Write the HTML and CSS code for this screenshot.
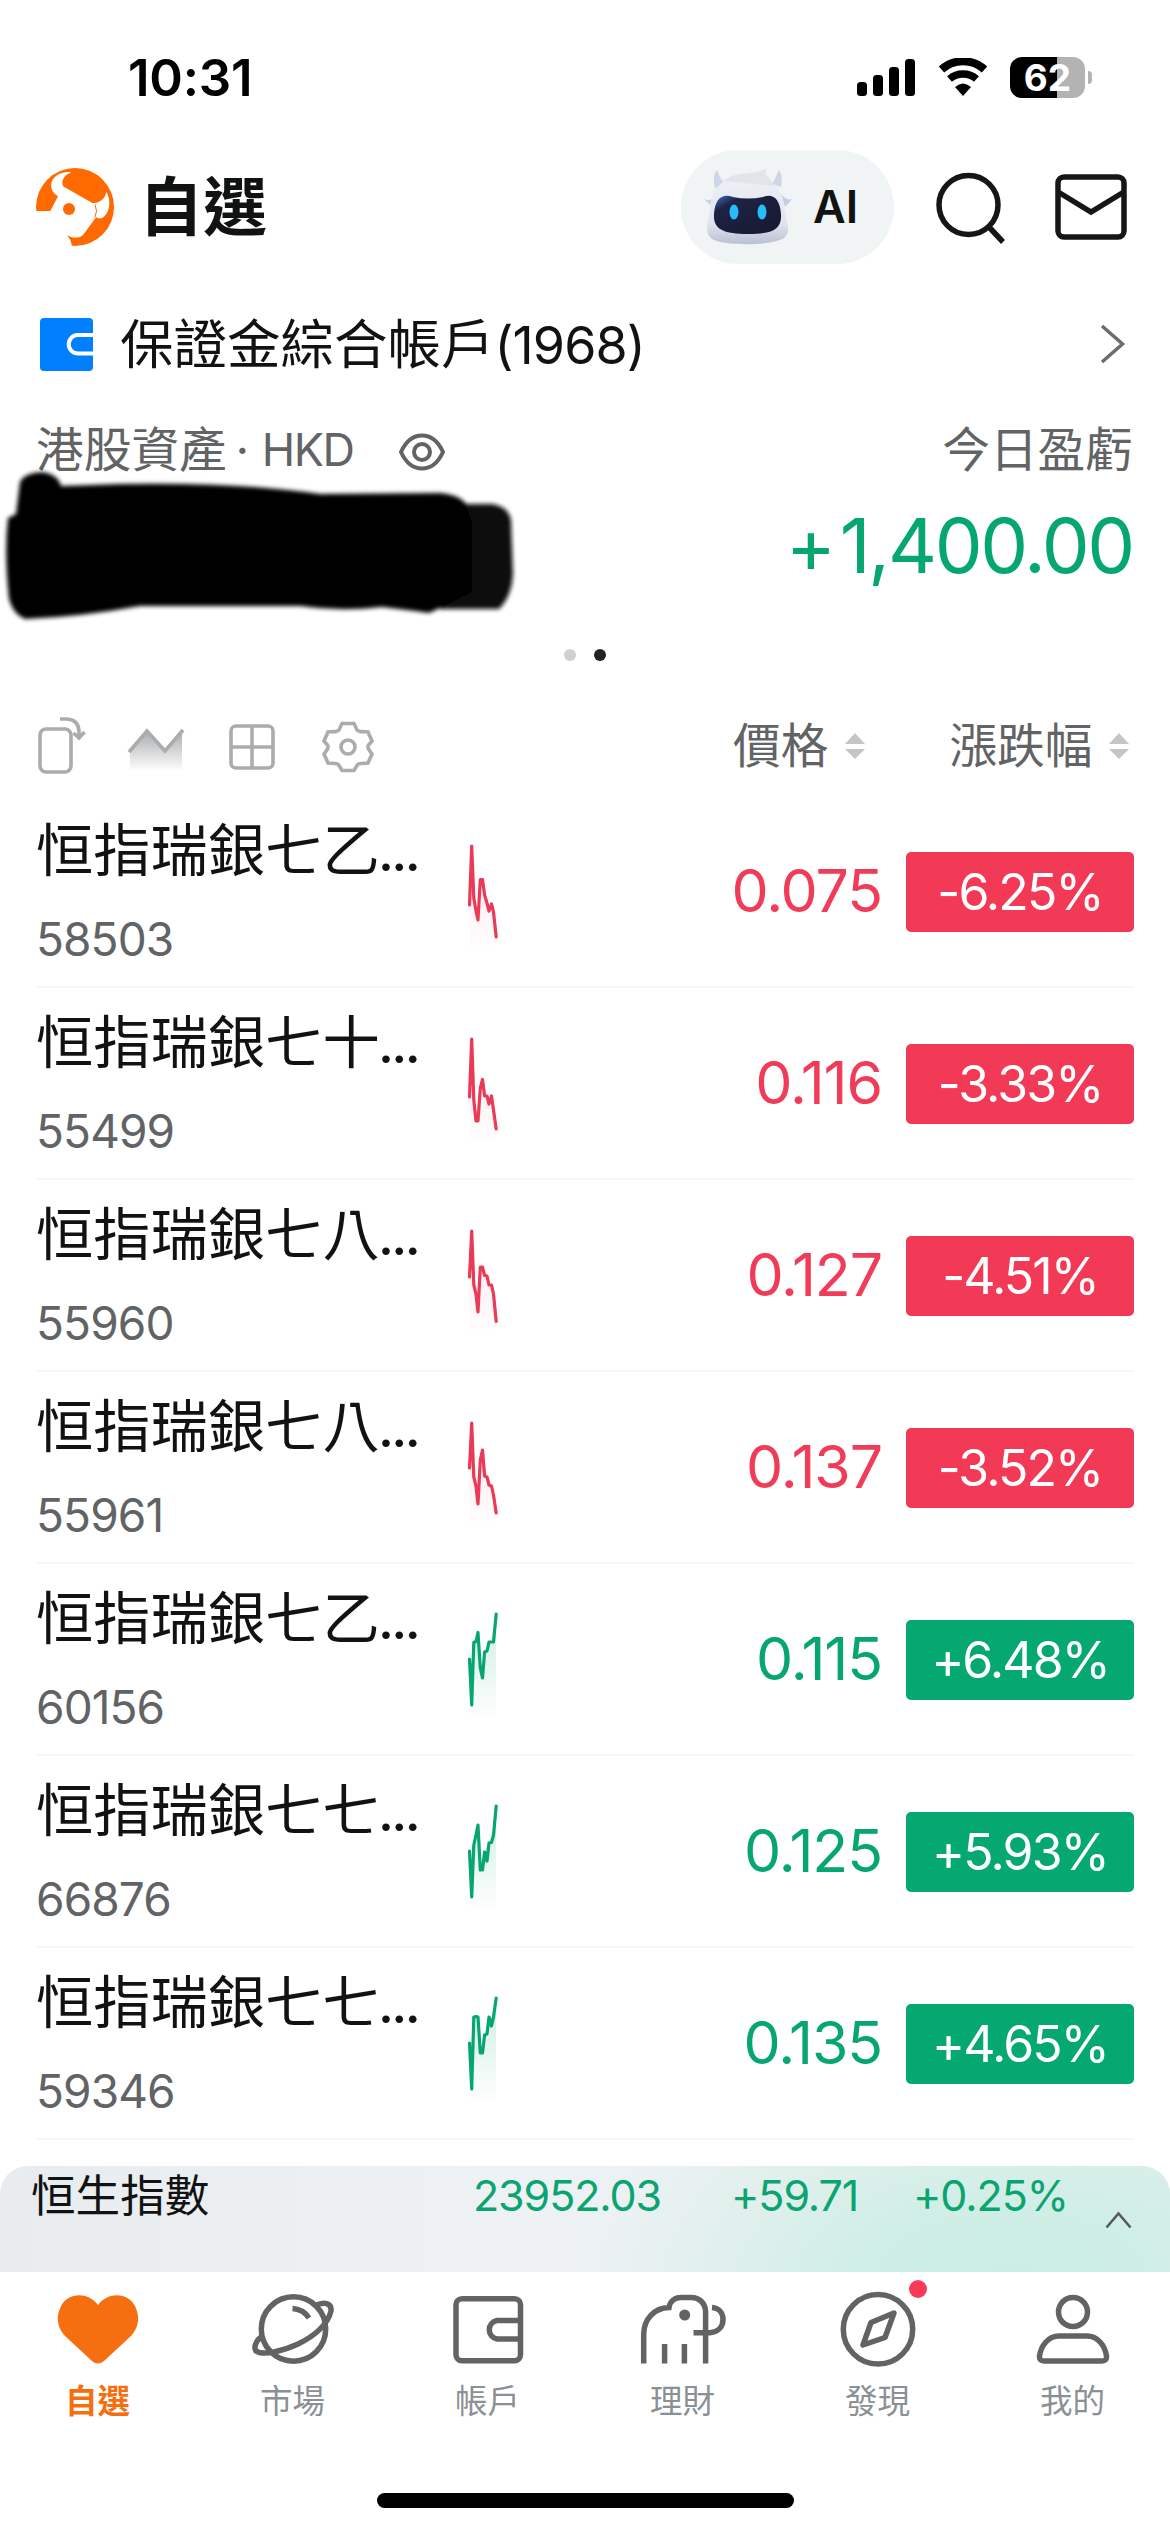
FILE: index.html
```html
<!DOCTYPE html>
<html lang="zh-Hant">
<head>
<meta charset="utf-8">
<title>自選</title>
<link rel="stylesheet" href="styles.css">
</head>
<body>
<svg width="0" height="0" class="defs">
  <defs>
    <linearGradient id="fadeRed" x1="0" y1="0" x2="0" y2="1"><stop offset="0" stop-color="#f23a57" stop-opacity=".13"/><stop offset="1" stop-color="#f23a57" stop-opacity="0.01"/></linearGradient>
    <linearGradient id="fadeGreen" x1="0" y1="0" x2="0" y2="1"><stop offset="0" stop-color="#04a870" stop-opacity=".2"/><stop offset="1" stop-color="#04a870" stop-opacity="0.01"/></linearGradient>
  </defs>
</svg>
<div class="screen">
  <div class="status">
    <span class="time">10:31</span>
    <div class="status-icons">
      <svg width="60" height="40" viewBox="0 0 60 40"><rect x="0" y="24" width="10" height="14" rx="3.5"/><rect x="16" y="17" width="10" height="21" rx="3.5"/><rect x="32" y="9" width="10" height="29" rx="3.5"/><rect x="48" y="1" width="10" height="37" rx="3.5"/></svg>
      <svg class="wifi" width="52" height="40" viewBox="0 0 52 40"><path d="M4.500 11.500A32 32 0 0 1 47.500 11.500" fill="none" stroke="#000" stroke-width="8"/><path d="M12.500 21A21 21 0 0 1 39.500 21" fill="none" stroke="#000" stroke-width="7.500"/><path d="M18 29Q26 22 34 29L26 38Z"/></svg>
      <div class="battery"><span>62</span></div>
      <i class="nub"></i>
    </div>
  </div>

  <header class="top">
    <svg class="logo" viewBox="36 36 234 234"><circle cx="153" cy="153" r="117" fill="#ff6a00"/><path d="M30 165H79L102 121C84 109 78 95 83 78C91 56 118 45 142 49C120 58 111 74 117 91L205 141C226 141 243 130 247 107C262 133 257 164 242 180C232 190 223 188 216 184L180 233C170 248 145 248 128 237Q142 250 143 270V280H30Z" fill="#fff"/><path d="M213 145Q222 165 213 184" fill="none" stroke="#ff6a00" stroke-width="3"/><circle cx="135" cy="159" r="18" fill="#ff6a00"/></svg>
    <h1>自選</h1>
    <div class="ai">
      <svg width="90" height="78" viewBox="0 0 90 78">
        <defs><linearGradient id="shell" x1="0" y1="0" x2="0" y2="1"><stop offset="0" stop-color="#eef0f6"/><stop offset=".7" stop-color="#e0e4f0"/><stop offset="1" stop-color="#b9c0d3"/></linearGradient><linearGradient id="visor" x1="0" y1="0" x2="1" y2="1"><stop offset="0" stop-color="#3f6fc8"/><stop offset=".22" stop-color="#1d2344"/><stop offset="1" stop-color="#171730"/></linearGradient></defs>
        <path d="M12 21Q9 9 14 3Q17 13 23 17ZM78 20Q80 9 76 3Q72 12 69 17Z" fill="#cdd5e6"/>
        <path d="M1 32Q10 36 14 26L10 40ZM89 32Q82 34 78 26L82 40Z" fill="#c5cde0"/>
        <path d="M7 42C9 14 27 9 45 9C66 9 80 18 82 44C84 56 88 64 82 70C74 79 14 80 7 70C1 63 6 54 7 42Z" fill="url(#shell)"/>
        <path d="M20 14C34 3 52 9 64 1Q60 8 66 11L72 19Z" fill="#e2e4ea"/>
        <path d="M30 30C19 26 12 32 11 47C10 62 20 67 45 67C70 67 79 62 78 47C77 32 70 26 60 30Q45 33 30 30Z" fill="url(#visor)"/>
        <ellipse cx="31" cy="45" rx="4.500" ry="7.500" fill="#27bdf8"/><ellipse cx="59" cy="45" rx="4.500" ry="7.500" fill="#27bdf8"/>
      </svg>
      <span>AI</span>
    </div>
    <svg class="search" width="72" height="74" viewBox="0 0 72 74"><circle cx="34.500" cy="34" r="29.500"/><path d="M55 56L69 71"/></svg>
    <svg class="mail" width="72" height="66" viewBox="0 0 72 66"><rect x="3" y="3" width="66" height="60" rx="6"/><path d="M4 18.500L36 38L68 18.500"/></svg>
  </header>

  <section class="account">
    <svg width="53" height="53" viewBox="0 0 53 53"><rect width="53" height="53" rx="4" fill="#0080ff"/><path d="M53 17H38A9 9 0 0 0 38 35.500H53" fill="none" stroke="#fff" stroke-width="4"/></svg>
    <span class="account-name">保證金綜合帳戶<b>(1968)</b></span>
    <svg class="chevron" width="26" height="40" viewBox="0 0 26 40"><path d="M2 2L22.500 20L2 38" fill="none" stroke="#6a6c6e" stroke-width="3.500"/></svg>
  </section>

  <section class="assets">
    <div class="labels">
      <span class="asset-label">港股資產</span><i class="mid">·</i><span class="ccy">HKD</span>
      <svg class="eye" width="46" height="38" viewBox="0 0 46 38"><path d="M2 19C7 8 14 2.500 23 2.500S39 8 44 19C39 30 32 35.500 23 35.500S7 30 2 19Z"/><circle cx="23" cy="19" r="8"/></svg>
      <span class="pl-label">今日盈虧</span>
    </div>
    <div class="pl"><i>+</i>1,400.00</div>
    <svg class="redact" width="530" height="170" viewBox="0 0 530 170">
      <defs><filter id="soft"><feGaussianBlur stdDeviation="2.2"/></filter></defs>
      <g filter="url(#soft)"><path d="M464 42L492 42Q508 44 511 58L513 112Q512 134 499 147L440 147Z" fill="#111"/><path d="M8 56L16 52L20 20Q24 11 42 10Q58 12 61 24L120 22Q240 20 320 32L440 31Q460 33 466 42L472 60V130L440 146L429 151L415 149L382 145Q340 150 300 144H140Q80 155 25 157Q13 152 9 137Q4 90 8 56Z" fill="#000"/></g>
    </svg>
  </section>
  <div class="pager"><i></i><i class="on"></i></div>

  <div class="toolbar">
    <svg class="t1" width="50" height="58" viewBox="0 0 50 58"><rect x="2" y="13" width="31" height="43" rx="6"/><path d="M22 3H29Q41 4 41 16V21M35.500 17L41 22L46.500 16"/></svg>
    <svg class="t2" width="58" height="46" viewBox="0 0 58 46"><defs><linearGradient id="hill" x1="0" y1="0" x2="0" y2="1"><stop offset="0" stop-color="#aaacae"/><stop offset="1" stop-color="#aaacae" stop-opacity="0"/></linearGradient></defs><path d="M3 24L20 4L38 24L55 4V44H3Z" fill="url(#hill)" stroke="none"/><path d="M2 25L20 4L38 24L56 3"/></svg>
    <svg class="t3" width="48" height="48" viewBox="0 0 48 48"><rect x="3" y="3" width="42" height="42" rx="5"/><path d="M24 3V45M3 24H45"/></svg>
    <svg class="t4" width="52" height="52" viewBox="0 0 52 52"><path d="M20 2.500H32L35 9Q37 11 40 10.500L46 11L50 20L46.500 24Q45.500 26 46.500 28L50 33L46 42L39 42.500Q36 42.500 35 44.500L32 49.500H20L17 44.500Q16 42.500 13 42.500L6 42L2 33L5.500 28Q6.500 26 5.500 24L2 20L6 11L12 10.500Q15 11 17 9Z"/><circle cx="26" cy="26" r="7"/></svg>
    <span class="col-price">價格</span><svg class="sort" width="22" height="28" viewBox="0 0 22 28"><path d="M11 1L21 12H1ZM11 27L1 17H21Z"/></svg>
    <span class="col-change">漲跌幅</span><svg class="sort" width="22" height="28" viewBox="0 0 22 28"><path d="M11 1L21 12H1ZM11 27L1 17H21Z"/></svg>
  </div>

  <main class="list">
    <div class="row down"><div class="stock"><p>恒指瑞銀七乙<i>...</i></p><small>58503</small></div>
      <svg class="spark" viewBox="0 0 40 192"><path class="area" d="M7.500 109L9.700 50L11.800 102L16 124L18.300 83L20.500 83L22.600 99L27 115L29.500 108L31.500 115L34 141V151H7.500Z"/><polyline points="7.500,109 9.700,50 11.800,102 14,115 16,124 18.300,83.500 20.500,83.500 22.600,99 25,107 27,115 29.500,108 31.500,116 34.200,141"/></svg>
      <span class="price">0.075</span><span class="badge">-6.25%</span></div>
    <div class="row down"><div class="stock"><p>恒指瑞銀七十<i>...</i></p><small>55499</small></div>
      <svg class="spark" viewBox="0 0 40 192"><path class="area" d="M7.500 109L9.700 51L11.800 112L14 133H16L20.500 92L25 108L31.500 122L34 141V151H7.500Z"/><polyline points="7.500,109 9.700,51 11.800,112 14,133 16,133 18.300,100 20.500,91.500 22.600,108 25,108 27,116 29.500,108 31.500,122 34.200,141"/></svg>
      <span class="price">0.116</span><span class="badge">-3.33%</span></div>
    <div class="row down"><div class="stock"><p>恒指瑞銀七八<i>...</i></p><small>55960</small></div>
      <svg class="spark" viewBox="0 0 40 192"><path class="area" d="M7.500 97L9.700 51L11.800 105L16 132L18.300 87H20.500L25 96L31.500 114L34 141V151H7.500Z"/><polyline points="7.500,97 9.700,51 11.800,105 14,114 16,132 18.300,87 20.500,87 22.600,95.500 25,96 27,105 29.500,105 31.500,114 34.200,141.500"/></svg>
      <span class="price">0.127</span><span class="badge">-4.51%</span></div>
    <div class="row down"><div class="stock"><p>恒指瑞銀七八<i>...</i></p><small>55961</small></div>
      <svg class="spark" viewBox="0 0 40 192"><path class="area" d="M7.500 96L9.700 51L11.800 105L16 132L18.300 88L20.500 78L25 105L31.500 123L34 141V151H7.500Z"/><polyline points="7.500,96 9.700,51 11.800,105 14,114 16,132 18.300,88 20.500,78 22.600,104 25,105 27,113 29.500,114 31.500,123 34.200,141"/></svg>
      <span class="price">0.137</span><span class="badge">-3.52%</span></div>
    <div class="row up"><div class="stock"><p>恒指瑞銀七乙<i>...</i></p><small>60156</small></div>
      <svg class="spark" viewBox="0 0 40 192"><path class="area" d="M7.500 95L9.700 141L11.800 78L16 69L18.300 104L20.500 114L22.600 88L27 78H31.500L34 50V151H7.500Z"/><polyline points="7.500,95 9.700,141 11.800,78.500 14,77.500 16,68.500 18.300,104 20.500,114 22.600,88 25,87 27,78 29.500,78 31.500,78 34.200,50"/></svg>
      <span class="price">0.115</span><span class="badge">+6.48%</span></div>
    <div class="row up"><div class="stock"><p>恒指瑞銀七七<i>...</i></p><small>66876</small></div>
      <svg class="spark" viewBox="0 0 40 192"><path class="area" d="M7.500 95L9.700 141L11.800 89L16 69L18.300 114H20.500L22.600 96L27 87L31.500 79L34 50V151H7.500Z"/><polyline points="7.500,95 9.700,141 11.800,89 14,79 16,69 18.300,114 20.500,114 22.600,96 25,105 27,87 29.500,86.500 31.500,79 34.200,50"/></svg>
      <span class="price">0.125</span><span class="badge">+5.93%</span></div>
    <div class="row up"><div class="stock"><p>恒指瑞銀七七<i>...</i></p><small>59346</small></div>
      <svg class="spark" viewBox="0 0 40 192"><path class="area" d="M7.500 95L9.700 141L11.800 69H16L18.300 105H20.500L22.600 87L27 69L31.500 69L34 50V151H7.500Z"/><polyline points="7.500,95 9.700,141 11.800,69 14,68.500 16,69 18.300,105 20.500,105 22.600,87 25,86 27,69 29.500,78 31.500,69 34.200,50"/></svg>
      <span class="price">0.135</span><span class="badge">+4.65%</span></div>
  </main>

  <div class="ticker">
    <span class="index">恒生指數</span>
    <span class="q1">23952.03</span><span class="q2">+59.71</span><span class="q3">+0.25%</span>
    <svg class="caret" width="27" height="18" viewBox="0 0 27 18"><path d="M1.500 16.500L13.500 2.500L25.500 16.500" fill="none" stroke="#55595b" stroke-width="2.500"/></svg>
  </div>

  <nav class="tabs">
    <div class="tab active"><svg viewBox="0 0 90 80"><path d="M45 15C34 1 15 3 8 16C2 28 5 38 12 46L39 71Q45 76 51 71L78 46C85 38 88 28 82 16C75 3 56 1 45 15Z" fill="#f56f10" stroke="none"/></svg><span>自選</span></div>
    <div class="tab"><svg viewBox="0 0 90 80"><circle cx="45.500" cy="39" r="32.200"/><path d="M67 16C76 11 84 13 83 21C80 34 67 46 50 54C35 61 15 66 8 61C5 57 9 50 13 47M44.500 18.500Q55 19 61 28"/></svg><span>市場</span></div>
    <div class="tab"><svg viewBox="0 0 90 80"><rect x="13" y="8.700" width="64.500" height="62" rx="6"/><path d="M77 30.500H54A10 9.500 0 0 0 54 49H77"/></svg><span>帳戶</span></div>
    <div class="tab"><svg viewBox="0 0 90 80"><path d="M5.700 73.500V44C6 29 16 18 31 17.500C32 11 37 7.500 43 7.500H53C62 7.500 67.600 14 67.600 22V73.500M26.600 54V73.500M46.400 54V73.500M55.500 42.700H72C81 42 85 36 85 29.500C85 23 81 18 74 17.500"/><circle cx="46.700" cy="25" r="5.500" fill="#616365" stroke="none"/></svg><span>理財</span></div>
    <div class="tab"><svg viewBox="0 0 90 80"><ellipse cx="45" cy="39.300" rx="34.700" ry="34.700"/><path d="M61 23L52 47.500L30 55L38 32.500Z" stroke-linejoin="round"/></svg><i class="dot"></i><span>發現</span></div>
    <div class="tab"><svg viewBox="0 0 90 80"><circle cx="45" cy="22" r="14.500"/><path d="M31 46H59C70 46 77 56 78.500 66Q79 71 74 71H16Q11 71 11.500 66C13 56 20 46 31 46Z"/></svg><span>我的</span></div>
    <i class="home"></i>
  </nav>
</div>
</body>
</html>
```
FILE: styles.css
```css
* { box-sizing: border-box; }
body { margin: 0; background: #fff; color: #111313; font-family: Inter, "Noto Sans CJK TC", sans-serif; }
i { font-style: normal; }
p, h1 { margin: 0; }
svg { display: block; flex: none; }
.defs { position: absolute; }
.screen { width: 1170px; height: 2532px; overflow: hidden; display: flex; flex-direction: column; white-space: nowrap; }
.screen > * { flex: none; }

.status { height: 130px; padding: 0 78px 0 128px; display: flex; justify-content: space-between; }
.time { margin-top: 47px; font-size: 51px; line-height: 62px; font-weight: 600; letter-spacing: -0.2px; color: #000; }
.status-icons { display: flex; margin-top: 57px; height: 42px; }
.status-icons svg { margin-top: 1px; }
.wifi { margin-left: 20px; }
.battery { margin-left: 21px; width: 75px; height: 41px; border-radius: 12px; background: linear-gradient(90deg, #000 47px, #b3b3b3 47px); color: #fff; font-size: 37px; font-weight: 700; line-height: 41px; text-align: center; }
.nub { width: 4px; height: 13px; margin: 14px 0 0 3px; border-radius: 0 4px 4px 0; background: #b3b3b3; }

.top { height: 154px; padding: 0 43px 0 36px; display: flex; align-items: center; }
.logo { width: 78px; height: 78px; }
.top h1 { margin: -1px 0 0 25px; font-size: 64px; line-height: 80px; font-weight: 700; }
.ai { margin-left: auto; width: 213px; height: 114px; border-radius: 57px; background: #f0f4f5; display: flex; align-items: center; padding-left: 22px; gap: 20px; font-size: 45px; line-height: 54px; font-weight: 600; }
.ai svg { margin-bottom: 2px; }
.search, .mail { fill: none; stroke: #151717; stroke-width: 5.5; }
.search { margin: 2px 0 0 40px; }
.mail { margin-left: 49px; }

.account { height: 120px; padding: 0 44px 0 40px; display: flex; align-items: center; }
.account-name { margin: 2px 0 0 27px; font-size: 53.5px; line-height: 70px; }
.account-name b { font-weight: 400; font-size: 52px; letter-spacing: -0.9px; }
.chevron { margin-left: auto; }

.assets { position: relative; height: 193px; padding: 0 37px 0 36px; color: #616365; }
.labels { height: 90px; padding-top: 2px; display: flex; align-items: center; font-size: 47.7px; line-height: 60px; }
.mid { width: 31px; margin-left: 0; text-align: center; }
.ccy { margin-left: 4px; font-size: 45px; letter-spacing: -1.5px; }
.eye { margin: 3px 0 0 46px; fill: none; stroke: #616365; stroke-width: 4; }
.pl-label { margin-left: auto; }
.pl { height: 103px; line-height: 103px; text-align: right; font-size: 76px; letter-spacing: -2.3px; color: #06a671; }
.pl i { margin-right: 6px; }
.redact { position: absolute; left: 0; top: 58px; }
.pager { height: 116px; display: flex; justify-content: center; align-items: center; gap: 18px; }
.pager i { width: 12px; height: 12px; border-radius: 50%; background: #d0d0d0; }
.pager .on { background: #222; }

.toolbar { height: 64px; margin-bottom: 19px; padding-left: 38px; display: flex; align-items: center; color: #616365; font-size: 47.7px; line-height: 60px; }
.toolbar svg { fill: none; stroke: #aaacae; stroke-width: 3.6; }
.toolbar span { margin-top: 2px; }
.t2 { margin: 10px 0 0 39px; }
.t3 { margin: 4px 0 0 43px; }
.t4 { margin: 4px 0 0 46px; }
.toolbar .col-price { margin-left: 359px; }
.toolbar .col-change { margin-left: 83px; }
.toolbar .sort { margin: 2px 0 0 16px; fill: #c3c5c6; stroke: none; }

.row { height: 192px; margin: 0 36px 0 36px; border-bottom: 2px solid #f6f7f8; display: flex; }
.stock { width: 426px; padding-top: 19px; }
.stock p { font-size: 57.3px; line-height: 70px; }
.stock i { margin-left: -2px; letter-spacing: -3.2px; }
.stock small { display: block; margin-top: 26px; font-size: 46px; line-height: 56px; letter-spacing: -0.9px; color: #616365; }
.spark { width: 40px; height: 192px; fill: none; stroke-width: 3.2; stroke-linejoin: round; stroke-linecap: round; }
.area { stroke: none; }
.price { width: 380px; text-align: right; font-size: 59px; line-height: 189px; letter-spacing: -1.1px; }
.badge { margin: 56px 0 0 auto; width: 228px; height: 80px; border-radius: 5px; color: #fff; text-align: center; font-size: 50px; line-height: 80px; letter-spacing: -1.9px; }
.down .spark { stroke: #ea3a58; }
.down .area { fill: url(#fadeRed); }
.down .price { color: #f03c58; }
.down .badge { background: #f23a57; }
.up .spark, .up .price { stroke: #06a671; color: #06a671; }
.up .price { stroke: none; }
.up .area { fill: url(#fadeGreen); }
.up .badge { background: #04a870; }
.row .area { stroke: none; }

.ticker { height: 106px; margin-top: 26px; border-radius: 28px 28px 0 0; background: radial-gradient(ellipse 420px 190px at 1010px 106px, #caeee4 0, #cfeee6 35%, rgba(216,239,233,.6) 65%, rgba(239,242,245,0) 100%), linear-gradient(90deg, #e8ecee 0, #eff2f5 45%, #e6f0ef 70%, #d9eee9 100%); display: flex; align-items: flex-start; font-size: 43px; line-height: 58px; letter-spacing: -1.1px; color: #0aa470; }
.index { width: 442px; padding: 1px 0 0 31px; font-size: 44.6px; letter-spacing: 0; color: #111313; }
.q1 { width: 258px; padding-left: 31px; }
.q2 { width: 182px; padding-left: 31px; }
.q3 { width: 223px; padding-left: 31px; }
.caret { margin-top: 45px; }

.tabs { position: relative; height: 260px; display: grid; grid-template-columns: repeat(6, 195px); }
.tab { position: relative; display: flex; flex-direction: column; align-items: center; padding-top: 18px; font-size: 32.500px; line-height: 40px; color: #8b9094; }
.tab svg { width: 90px; height: 80px; margin-bottom: 12px; fill: none; stroke: #616365; stroke-width: 5.5; overflow: visible; }
.active { color: #f56f10; font-weight: 700; }
.dot { position: absolute; left: 129px; top: 8px; width: 18px; height: 18px; border-radius: 50%; background: #f93a56; }
.home { position: absolute; left: 377px; top: 221px; width: 417px; height: 15px; border-radius: 8px; background: #000; }
```
